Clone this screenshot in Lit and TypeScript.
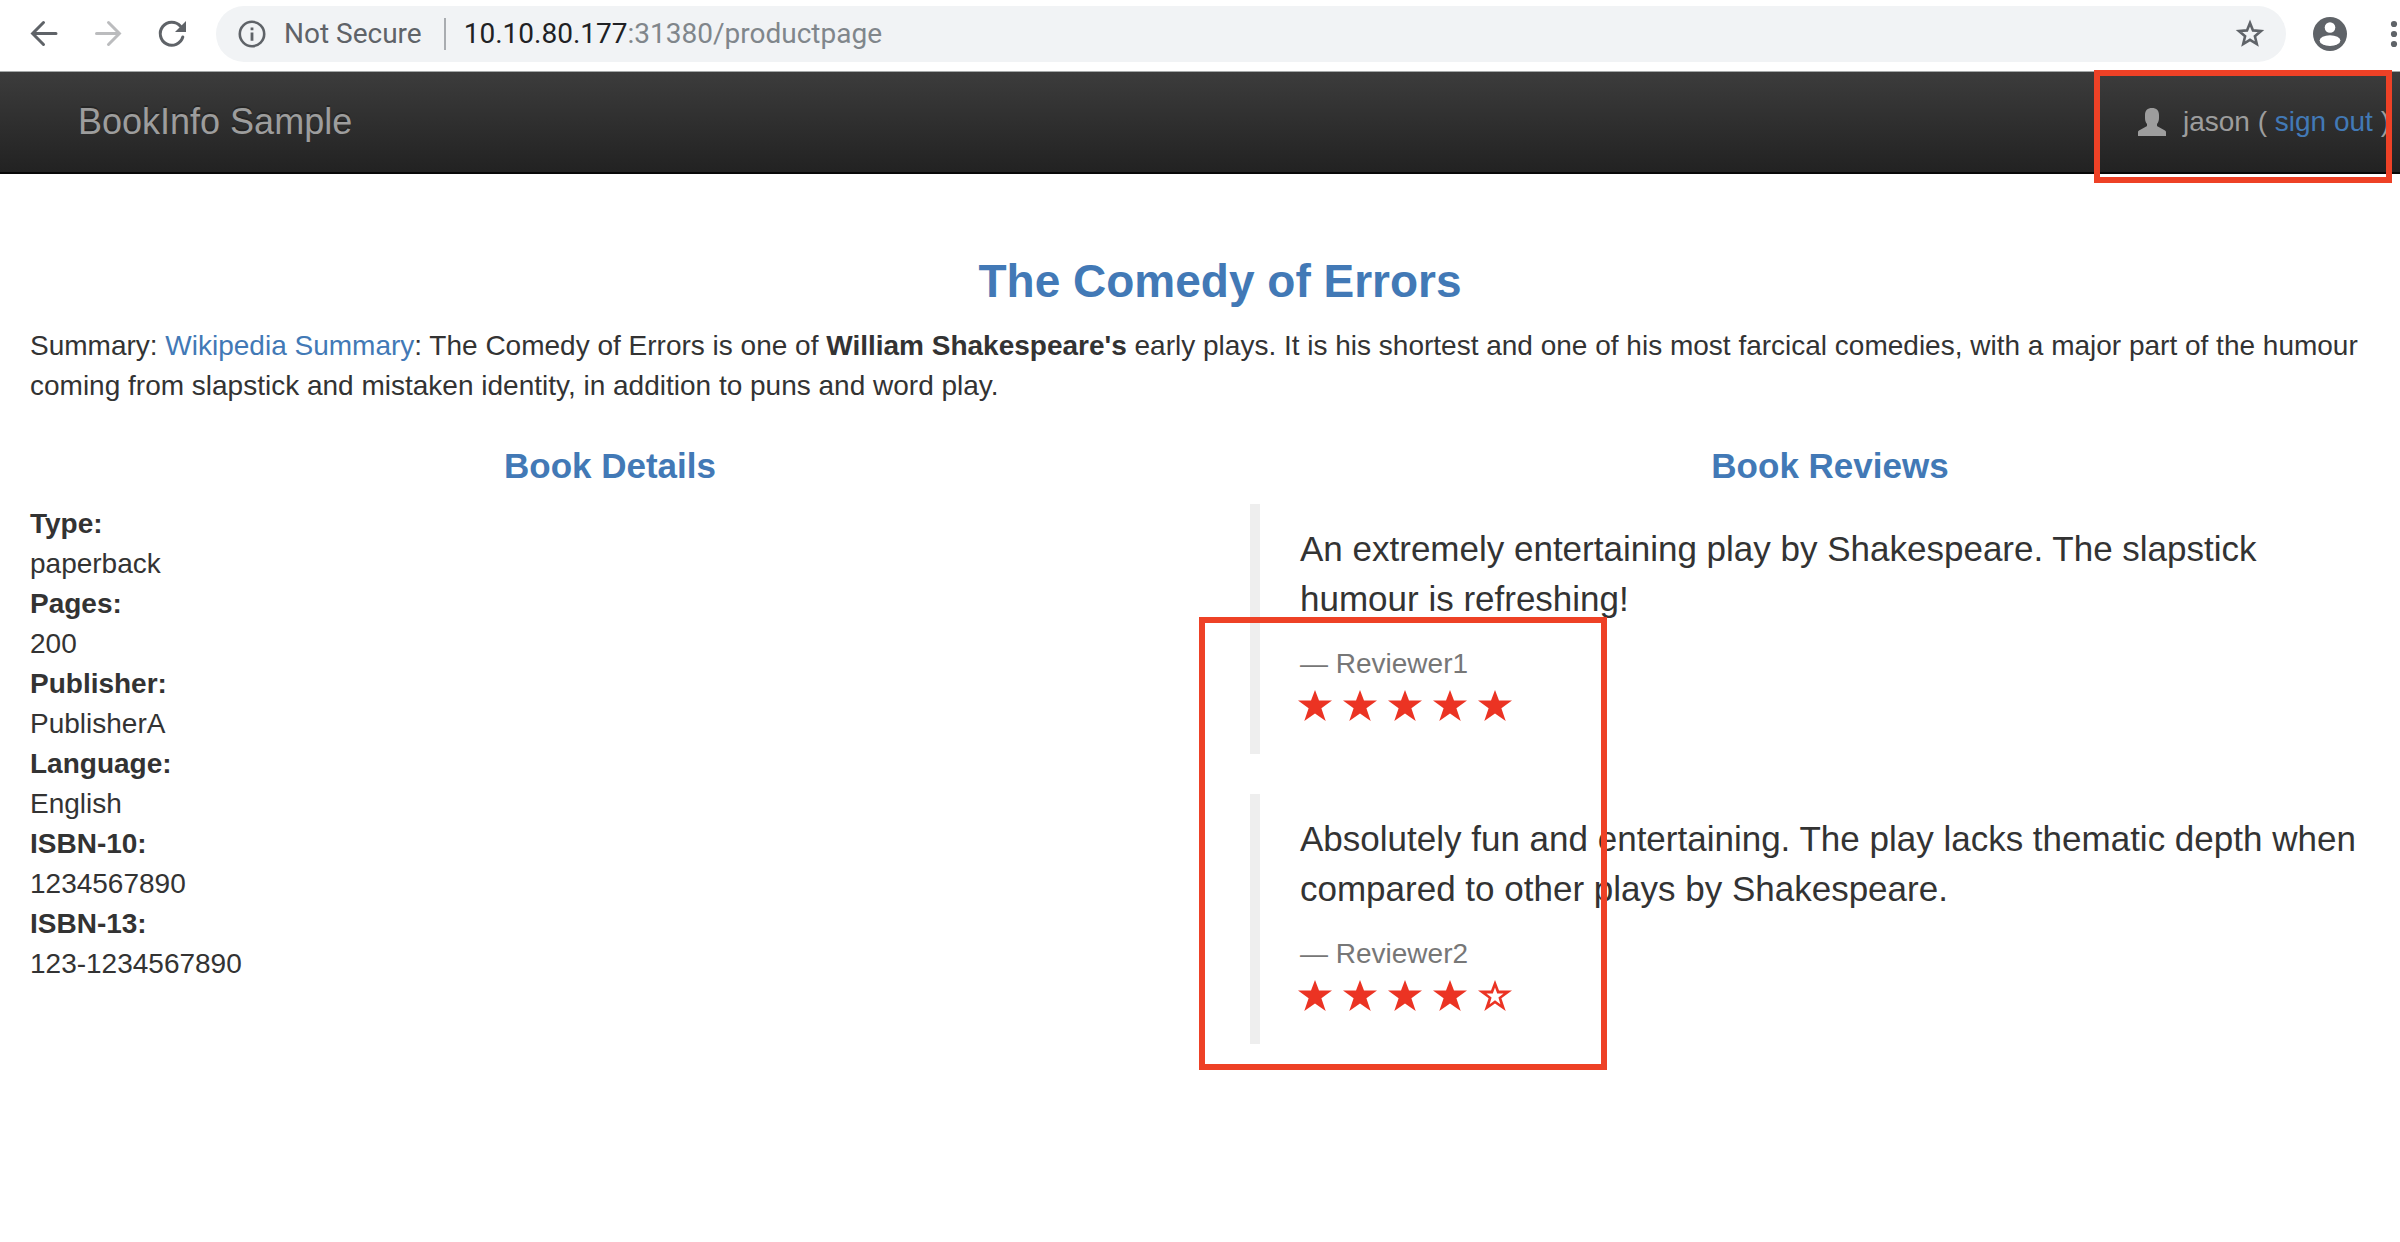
import { LitElement, html, css, svg } from "lit";
import { customElement } from "lit/decorators.js";

const DETAILS: [string, string][] = [
  ["Type:", "paperback"],
  ["Pages:", "200"],
  ["Publisher:", "PublisherA"],
  ["Language:", "English"],
  ["ISBN-10:", "1234567890"],
  ["ISBN-13:", "123-1234567890"],
];

const REVIEWS = [
  {
    text: "An extremely entertaining play by Shakespeare. The slapstick humour is refreshing!",
    reviewer: "Reviewer1",
    stars: 5,
  },
  {
    text: "Absolutely fun and entertaining. The play lacks thematic depth when compared to other plays by Shakespeare.",
    reviewer: "Reviewer2",
    stars: 4,
  },
];

const STAR = "M17 0L21 10.4H34L23.4 18.2L27.7 31L17 23.4L6.3 31L10.6 18.2L0 10.4H13Z";
const STAR_HOLE = "M17 7.6L19.2 13.4H25.6L20.4 17.4L22.4 24.2L17 20.2L11.6 24.2L13.6 17.4L8.4 13.4H14.8Z";

@customElement("app-root")
export class AppRoot extends LitElement {
  static styles = css`
    :host {
      display: block;
      position: relative;
      overflow: hidden;
      min-height: 100vh;
      background: #fff;
      color: #333;
      font: 28px/40px "Liberation Sans", Arial, sans-serif;
    }
    a {
      color: #4279b6;
      text-decoration: none;
    }
    svg {
      display: block;
    }
    button {
      padding: 0;
      border: 0;
      background: none;
      color: #5f6368;
    }
    .toolbar {
      display: flex;
      align-items: center;
      height: 71px;
      padding: 0 2px 3px 28px;
      box-sizing: border-box;
      font: 28px/40px Roboto, sans-serif;
    }
    .history {
      display: flex;
      gap: 32px;
      margin-right: 28px;
    }
    .history .disabled {
      color: #bbbcbe;
    }
    .omnibox {
      display: flex;
      flex: 1;
      align-items: center;
      height: 56px;
      padding: 0 20px 0 22px;
      border-radius: 28px;
      background: #f1f3f5;
      color: #5f6368;
    }
    .security {
      display: flex;
      align-items: center;
      gap: 18px;
      padding-right: 22px;
      border-right: 2px solid #a9acb0;
      line-height: 32px;
    }
    .url {
      flex: 1;
      padding-left: 18px;
      color: #80868b;
    }
    .host {
      color: #202124;
    }
    .account {
      margin: 0 43px 0 27px;
    }
    .navbar {
      display: flex;
      align-items: center;
      justify-content: space-between;
      height: 100px;
      padding: 0 10px 0 78px;
      border-top: 1px solid #a4a8a8;
      border-bottom: 2px solid #080808;
      background: linear-gradient(#3c3c3c, #222);
      color: #9d9d9d;
    }
    .brand {
      color: #9d9d9d;
      font-size: 36px;
      text-shadow: 0 -2px 0 rgba(0, 0, 0, 0.25);
    }
    .user {
      display: flex;
      align-items: center;
      gap: 16px;
    }
    .page {
      width: calc(100% + 40px);
      padding: 80px 30px 0;
      box-sizing: border-box;
    }
    h1,
    h2 {
      margin: 0 0 18px;
      color: #4279b6;
      text-align: center;
    }
    h1 {
      font-size: 46px;
      line-height: 54px;
    }
    h2 {
      font-size: 35px;
      line-height: 40px;
    }
    .summary {
      margin: 0 0 40px;
    }
    .columns {
      display: grid;
      grid-template-columns: 1fr 1fr;
      gap: 60px;
    }
    .details {
      margin: 0;
    }
    .details dt {
      font-weight: bold;
    }
    .details dd {
      margin: 0;
    }
    .reviews {
      position: relative;
    }
    .review {
      margin: 0 0 40px;
      padding: 20px 40px;
      border-left: 10px solid #eee;
    }
    .quote {
      margin: 0 0 20px;
      font-size: 35px;
      line-height: 50px;
    }
    .reviewer {
      color: #777;
    }
    .stars {
      display: flex;
      align-items: center;
      gap: 11px;
      height: 50px;
      margin-left: -2px;
      padding-bottom: 8px;
      box-sizing: border-box;
      color: #eb3323;
    }
    .marker {
      position: absolute;
      box-sizing: border-box;
      border: 6px solid #ee4126;
      pointer-events: none;
    }
    .marker-user {
      top: 70px;
      right: 8px;
      width: 298px;
      height: 113px;
    }
    .marker-stars {
      top: 171px;
      left: -51px;
      width: 408px;
      height: 453px;
    }
  `;

  private star(filled: boolean) {
    return svg`<svg width="34" height="31" viewBox="0 0 34 31" aria-hidden="true">
      <path fill="currentColor" fill-rule="evenodd" d=${filled ? STAR : STAR + STAR_HOLE} />
    </svg>`;
  }

  private toolbar() {
    return html`<header class="toolbar">
      <div class="history">
        <button aria-label="Back">
          <svg width="32" height="32" viewBox="0 0 32 32" fill="none" stroke="currentColor" stroke-width="3" stroke-linecap="round">
            <path d="M28 15.5H5M15.5 4.5L4.6 15.5L15.5 26.5" />
          </svg>
        </button>
        <button class="disabled" aria-label="Forward" disabled>
          <svg width="32" height="32" viewBox="0 0 32 32" fill="none" stroke="currentColor" stroke-width="3" stroke-linecap="round">
            <path d="M4.5 15.5H27M16.5 4.5L27.4 15.5L16.5 26.5" />
          </svg>
        </button>
        <button aria-label="Reload">
          <svg width="32" height="32" viewBox="0 0 32 32">
            <path d="M24.5 8.2A11.5 11.5 0 1 0 26.8 19" fill="none" stroke="currentColor" stroke-width="3" stroke-linecap="round" />
            <path d="M30 3V14H19Z" fill="currentColor" />
          </svg>
        </button>
      </div>
      <div class="omnibox">
        <div class="security">
          <svg width="28" height="28" viewBox="0 0 28 28">
            <circle cx="14" cy="14" r="12.2" fill="none" stroke="currentColor" stroke-width="2.6" />
            <path d="M12.6 7.4H15.4V10.2H12.6ZM12.6 12.6H15.4V20.8H12.6Z" fill="currentColor" />
          </svg>
          <span>Not Secure</span>
        </div>
        <div class="url"><span class="host">10.10.80.177</span>:31380/productpage</div>
        <button aria-label="Bookmark this page">
          <svg width="32" height="32" viewBox="0 0 32 32" fill="none" stroke="currentColor" stroke-width="2.6">
            <path d="M16 5L19 12.4L27 13L20.9 18.2L22.8 26L16 21.8L9.2 26L11.1 18.2L5 13L13 12.4Z" />
          </svg>
        </button>
      </div>
      <button class="account" aria-label="Profile">
        <svg width="34" height="34" viewBox="0 0 34 34">
          <circle cx="17" cy="17" r="17" fill="currentColor" />
          <circle cx="17" cy="10.5" r="5.3" fill="#fff" />
          <ellipse cx="17" cy="23.6" rx="10.4" ry="5.3" fill="#fff" />
        </svg>
      </button>
      <button aria-label="Menu">
        <svg width="8" height="28" viewBox="0 0 8 28" fill="currentColor">
          <circle cx="4" cy="4" r="3.1" />
          <circle cx="4" cy="14" r="3.1" />
          <circle cx="4" cy="24" r="3.1" />
        </svg>
      </button>
    </header>`;
  }

  render() {
    return html`
      ${this.toolbar()}
      <nav class="navbar">
        <a class="brand" href="#">BookInfo Sample</a>
        <div class="user">
          <svg width="30" height="30" viewBox="0 0 30 30" aria-hidden="true">
            <path
              fill="currentColor"
              d="M15 1C19.5 1 22 3.6 22 8V11C22 13.6 21.4 15.4 20 17V18.4C20 19 20.3 19.3 20.8 19.6L28 23.6C28.8 24.1 29 24.6 29 25.4V29H1V25.4C1 24.6 1.2 24.1 2 23.6L9.2 19.6C9.7 19.3 10 19 10 18.4V17C8.6 15.4 8 13.6 8 11V8C8 3.6 10.5 1 15 1Z"
            />
          </svg>
          <span>jason ( <a href="#">sign out</a> )</span>
        </div>
      </nav>
      <main class="page">
        <h1>The Comedy of Errors</h1>
        <p class="summary">
          Summary: <a href="#">Wikipedia Summary</a>: The Comedy of Errors is one of
          <b>William Shakespeare's</b> early plays. It is his shortest and one of his most farcical comedies, with a
          major part of the humour coming from slapstick and mistaken identity, in addition to puns and word play.
        </p>
        <div class="columns">
          <section>
            <h2>Book Details</h2>
            <dl class="details">
              ${DETAILS.map(([name, value]) => html`<dt>${name}</dt><dd>${value}</dd>`)}
            </dl>
          </section>
          <section class="reviews">
            <h2>Book Reviews</h2>
            ${REVIEWS.map(
              (r) => html`<blockquote class="review">
                <p class="quote">${r.text}</p>
                <div class="reviewer">— ${r.reviewer}</div>
                <div class="stars" role="img" aria-label="${r.stars} of 5 stars">
                  ${[0, 1, 2, 3, 4].map((i) => this.star(i < r.stars))}
                </div>
              </blockquote>`
            )}
            <div class="marker marker-stars"></div>
          </section>
        </div>
      </main>
      <div class="marker marker-user"></div>
    `;
  }
}
